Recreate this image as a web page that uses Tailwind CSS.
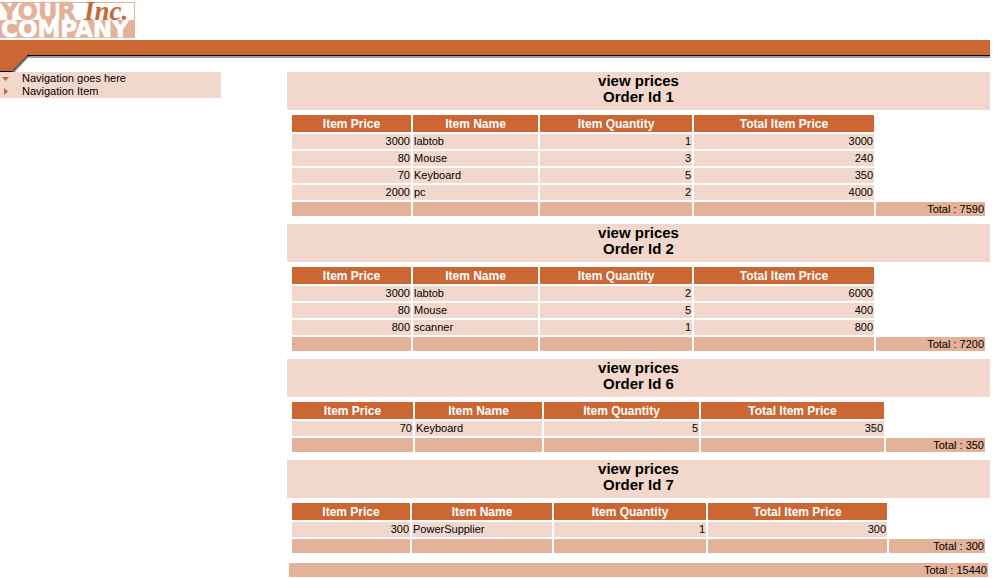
<!DOCTYPE html>
<html lang="en">
<head>
<meta charset="utf-8">
<meta name="viewport" content="width=device-width, initial-scale=1">
<title>View prices</title>
<script src="https://cdn.jsdelivr.net/npm/@tailwindcss/browser@4"></script>
</head>
<body class="bg-white text-black font-['Liberation_Sans',Arial,sans-serif] text-[11px] leading-[13px]">
<div class="pr-1">
<header>
  <div class="pt-0.5 pb-0.5">
    <svg class="block overflow-visible" width="135" height="36" viewBox="0 2 135 36" role="img" aria-label="Your Company Inc.">
      <rect x="0" y="2" width="135" height="36" fill="#e4b199"/>
      <path d="M0 3H134V20H0z" fill="#fff"/>
      <text x="1" y="20" font-family="DejaVu Sans, Verdana, sans-serif" font-weight="700" font-size="24" fill="#e4b199" stroke="#e4b199" stroke-width=".6">YOUR</text>
      <text x="1" y="37" font-family="DejaVu Sans, Verdana, sans-serif" font-weight="700" font-size="23" fill="#fff" stroke="#fff" stroke-width=".6">COMPANY</text>
      <text x="84" y="20" font-family="Liberation Serif, Times New Roman, serif" font-style="italic" font-weight="700" font-size="27" fill="#cc6633">Inc.</text>
    </svg>
  </div>
  <div class="h-[15px] bg-[#cc6633]"></div>
  <div class="flex h-[17px] items-start">
    <svg class="block shrink-0" width="30" height="17" viewBox="0 0 30 17" aria-hidden="true">
      <path d="M28 0H30V3H28L16 16V17H11z" fill="#bbb"/>
      <path d="M27 1H30V2H28L14.500 16V17H11z" fill="#666"/>
      <path d="M0 0H27.500L11.500 16.500V17H0z" fill="#cc6633"/>
      <path d="M27.500 .5L12 16.500" stroke="#444" stroke-width="1"/>
      <path d="M30 .5H27M12 16.500H0" fill="none" stroke="#000"/>
    </svg>
    <div class="h-[3px] grow border-t border-black bg-[#999]"></div>
  </div>
</header>
<div class="flex items-start gap-[66px]">
  <nav class="w-[221px] shrink-0 bg-[#f2d8cc]">
    <a href="#" class="flex items-center"><svg class="w-[22px] shrink-0" height="13" viewBox="0 0 22 13" aria-hidden="true"><path d="M2 5H9L5.500 9z" fill="#cc6633"/></svg>Navigation goes here</a>
    <a href="#" class="flex items-center"><svg class="w-[22px] shrink-0" height="13" viewBox="0 0 22 13" aria-hidden="true"><path d="M4 3V10L8 6.500z" fill="#cc6633"/></svg>Navigation Item</a>
  </nav>
  <main id="orders" class="min-w-0 grow"></main>
</div>
</div>
<script>
const orders = [
  { id: 1, cols: [121, 127, 154, 182], items: [[3000, 'labtob', 1, 3000], [80, 'Mouse', 3, 240], [70, 'Keyboard', 5, 350], [2000, 'pc', 2, 4000]], total: 7590 },
  { id: 2, cols: [121, 127, 154, 182], items: [[3000, 'labtob', 2, 6000], [80, 'Mouse', 5, 400], [800, 'scanner', 1, 800]], total: 7200 },
  { id: 6, cols: [123, 129, 157, 185], items: [[70, 'Keyboard', 5, 350]], total: 350 },
  { id: 7, cols: [120, 142, 154, 181], items: [[300, 'PowerSupplier', 1, 300]], total: 300 }
];
const heads = ['Item Price', 'Item Name', 'Item Quantity', 'Total Item Price'];
document.getElementById('orders').innerHTML = orders.map(o => `
  <section class="pb-1.5">
    <h2 class="h-[38px] bg-[#f2d8cc] pt-px text-center text-[15px] leading-4 font-bold">view prices<br>Order Id ${o.id}</h2>
    <div class="px-[3px] pt-[3px]">
      <table class="w-full table-fixed border-separate border-spacing-[2px]">
        <colgroup>${o.cols.map(w => `<col style="width:${w - 2}px">`).join('')}<col></colgroup>
        <thead><tr>${heads.map(h => `<th scope="col" class="h-[17px] bg-[#cc6633] px-0 pt-px pb-0 text-center text-xs leading-4 font-bold text-white">${h}</th>`).join('')}</tr></thead>
        <tbody>${o.items.map(r => `<tr>${r.map((v, i) => `<td class="h-[15px] bg-[#f2d8cc] px-px py-0 leading-[15px] ${i === 1 ? 'text-left' : 'text-right'}">${v}</td>`).join('')}</tr>`).join('')}</tbody>
        <tfoot><tr>${'<td class="h-3.5 bg-[#e4b199] p-0"></td>'.repeat(4)}<td class="h-3.5 bg-[#e4b199] px-px py-0 text-right leading-[14px]">Total : ${o.total}</td></tr></tfoot>
      </table>
    </div>
  </section>`).join('') + '<p class="mx-0.5 mt-0.5 bg-[#e4b199] px-px text-right leading-[14px]">Total : 15440</p>';
</script>
</body>
</html>
